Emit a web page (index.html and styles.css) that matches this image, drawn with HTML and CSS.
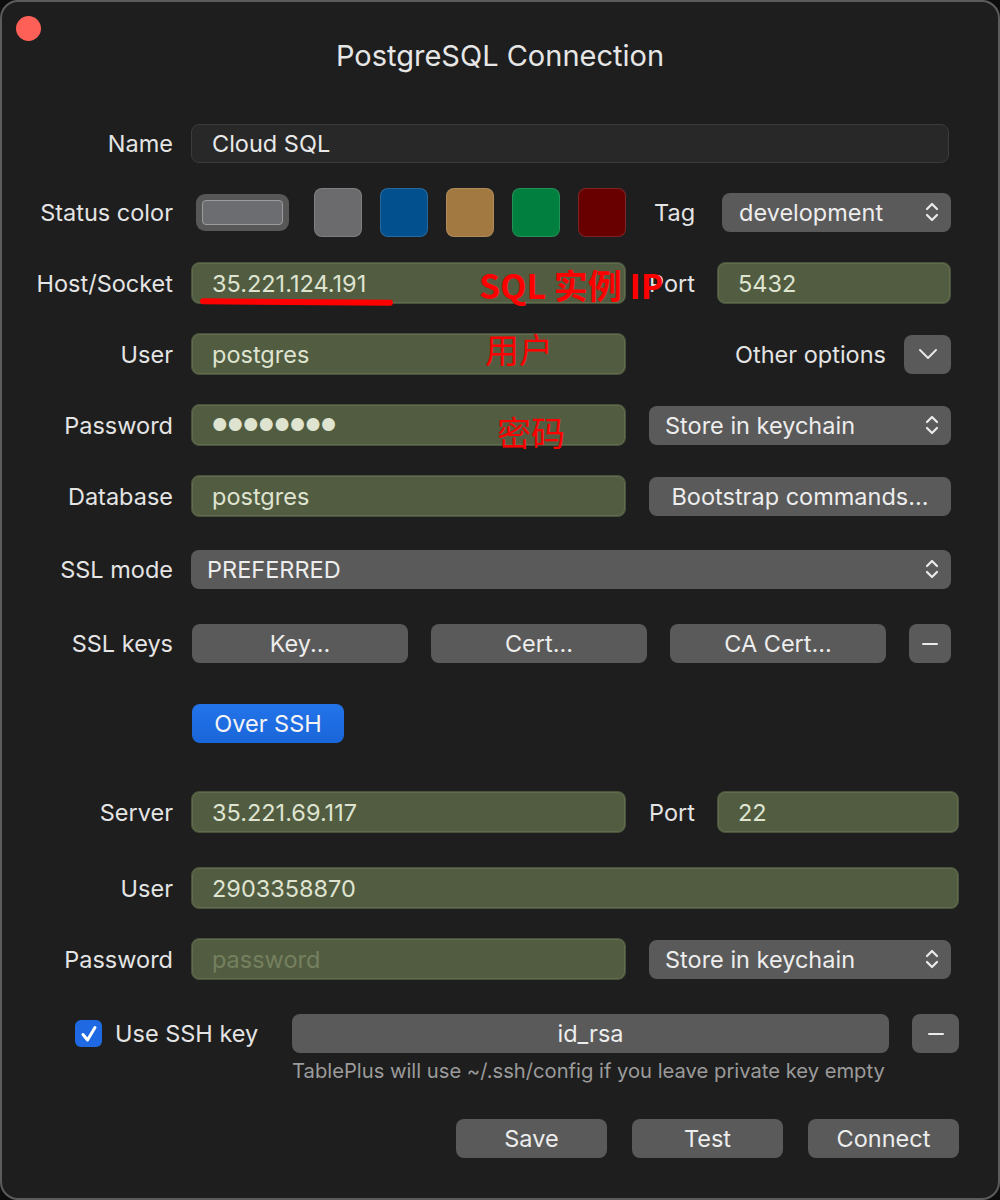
FILE: index.html
```html
<!DOCTYPE html>
<html>
<head>
<meta charset="utf-8">
<link rel="stylesheet" href="styles.css">
</head>
<body>
<div class="window">
  <span class="close-dot"></span>
  <h1 class="title">PostgreSQL Connection</h1>

  <div class="row row-name">
    <label class="lbl">Name</label>
    <div class="field field-plain grow">Cloud SQL</div>
  </div>

  <div class="row row-status">
    <label class="lbl">Status color</label>
    <div class="status-well"><span class="status-inner"></span></div>
    <div class="swatches">
      <span class="swatch sw-gray"></span>
      <span class="swatch sw-blue"></span>
      <span class="swatch sw-brown"></span>
      <span class="swatch sw-green"></span>
      <span class="swatch sw-red"></span>
    </div>
    <label class="side-lbl tag-lbl">Tag</label>
    <div class="select tag-select">development
      <svg class="updown" viewBox="0 0 14 26" width="14" height="26"><path d="M2 10 L7 5 L12 10 M2 16 L7 21 L12 16" fill="none" stroke="#eaeaea" stroke-width="2.2" stroke-linecap="round" stroke-linejoin="round"/></svg>
    </div>
  </div>

  <div class="row row-host">
    <label class="lbl">Host/Socket</label>
    <div class="field field-green half">35.221.124.191</div>
    <label class="side-lbl port-lbl">Port</label>
    <div class="field field-green port">5432</div>
  </div>

  <div class="row row-std">
    <label class="lbl">User</label>
    <div class="field field-green half">postgres</div>
    <div class="other">
      <span class="other-lbl">Other options</span>
      <div class="icon-btn">
        <svg viewBox="0 0 20 12" width="20" height="12"><path d="M2 2 L10 10 L18 2" fill="none" stroke="#e6e6e6" stroke-width="2" stroke-linecap="round" stroke-linejoin="round"/></svg>
      </div>
    </div>
  </div>

  <div class="row row-std">
    <label class="lbl">Password</label>
    <div class="field field-green half dots">●●●●●●●●</div>
    <div class="select side-select">Store in keychain
      <svg class="updown" viewBox="0 0 14 26" width="14" height="26"><path d="M2 10 L7 5 L12 10 M2 16 L7 21 L12 16" fill="none" stroke="#eaeaea" stroke-width="2.2" stroke-linecap="round" stroke-linejoin="round"/></svg>
    </div>
  </div>

  <div class="row row-std">
    <label class="lbl">Database</label>
    <div class="field field-green half">postgres</div>
    <div class="btn side-select centered">Bootstrap commands...</div>
  </div>

  <div class="row row-sslmode">
    <label class="lbl">SSL mode</label>
    <div class="select grow ssl-select">PREFERRED
      <svg class="updown" viewBox="0 0 14 26" width="14" height="26"><path d="M2 10 L7 5 L12 10 M2 16 L7 21 L12 16" fill="none" stroke="#eaeaea" stroke-width="2.2" stroke-linecap="round" stroke-linejoin="round"/></svg>
    </div>
  </div>

  <div class="row row-sslkeys">
    <label class="lbl">SSL keys</label>
    <div class="btn key-btn">Key...</div>
    <div class="btn key-btn">Cert...</div>
    <div class="btn key-btn">CA Cert...</div>
    <div class="btn minus-btn"><span class="minus"></span></div>
  </div>

  <div class="row row-ssh">
    <span class="lbl"></span>
    <div class="btn blue-btn">Over SSH</div>
  </div>

  <div class="row row-server wide">
    <label class="lbl">Server</label>
    <div class="field field-green half">35.221.69.117</div>
    <label class="side-lbl port-lbl">Port</label>
    <div class="field field-green port">22</div>
  </div>

  <div class="row row-std row-sshuser wide">
    <label class="lbl">User</label>
    <div class="field field-green grow">2903358870</div>
  </div>

  <div class="row row-std">
    <label class="lbl">Password</label>
    <div class="field field-green half placeholder">password</div>
    <div class="select side-select">Store in keychain
      <svg class="updown" viewBox="0 0 14 26" width="14" height="26"><path d="M2 10 L7 5 L12 10 M2 16 L7 21 L12 16" fill="none" stroke="#eaeaea" stroke-width="2.2" stroke-linecap="round" stroke-linejoin="round"/></svg>
    </div>
  </div>

  <div class="row row-sshkey">
    <div class="check-wrap">
      <span class="checkbox">
        <svg viewBox="0 0 26 26" width="26" height="26"><path d="M7 13.5 L11.5 19 L19 6.5" fill="none" stroke="#fff" stroke-width="3" stroke-linecap="round" stroke-linejoin="round"/></svg>
      </span>
      <span class="check-lbl">Use SSH key</span>
    </div>
    <div class="btn keyfile centered">id_rsa</div>
    <div class="btn minus-btn minus-wide"><span class="minus"></span></div>
  </div>
  <p class="hint">TablePlus will use ~/.ssh/config if you leave private key empty</p>

  <div class="actions">
    <div class="btn action">Save</div>
    <div class="btn action">Test</div>
    <div class="btn action">Connect</div>
  </div>

  <span class="note-ul"></span>
  <span class="note note-ip">SQL 实例 IP</span>
  <span class="note note-user">用户</span>
  <span class="note note-pass">密码</span>
</div>
</body>
</html>
```

FILE: styles.css
```css
* { box-sizing: border-box; }
html, body { margin: 0; padding: 0; }
body {
  background: #0d0d0d;
  font-family: Inter, "Open Sans", "Noto Sans CJK SC", sans-serif;
  color: #e4e4e4;
}
.window {
  position: relative;
  width: 1000px;
  height: 1200px;
  background: #1e1e1e;
  border: 2px solid #5c5c5c;
  border-radius: 18px;
  padding: 0 47px 0 0;
  overflow: hidden;
}
.close-dot {
  position: absolute;
  left: 14px;
  top: 14px;
  width: 25px;
  height: 25px;
  border-radius: 50%;
  background: #fe5f57;
}
.title {
  margin: 38px 0 0 0;
  height: 32px;
  line-height: 32px;
  text-align: center;
  font-size: 29px;
  font-weight: 400;
  color: #e6e6e6;
  padding-left: 47px;
}
.row {
  display: flex;
  align-items: center;
  font-size: 23.5px;
}
.lbl {
  width: 189px;
  flex: none;
  text-align: right;
  padding-right: 18px;
  color: #e4e4e4;
}
.grow { flex: 1; }
.half { width: 435px; flex: none; }
.wide { margin-right: -8px; }

.row-name { margin-top: 52px; height: 39px; }
.row-status { margin-top: 25px; height: 49px; }
.row-host { margin-top: 25px; height: 42px; }
.row-std { margin-top: 29px; height: 42px; }
.row-sslmode { margin-top: 33px; height: 39px; }
.row-sslkeys { margin-top: 35px; height: 39px; }
.row-ssh { margin-top: 41px; height: 39px; }
.row-server { margin-top: 48px; height: 42px; }
.row-std.row-sshuser { margin-top: 34px; }
.row-sshkey { margin-top: 34px; height: 39px; }

.field {
  height: 42px;
  border-radius: 8px;
  padding: 0 20px;
  display: flex;
  align-items: center;
  font-size: 23.5px;
}
.field-plain {
  height: 39px;
  background: #282828;
  border: 1px solid #3b3b3b;
  color: #e8e8e8;
  margin-right: 2px;
}
.field-green {
  background: #525c41;
  border: 1px solid #48513a;
  box-shadow: inset 0 0 0 1px #626d4f;
  color: #dfe4d1;
}
.dots { font-size: 17px; letter-spacing: 0; }
.placeholder { color: #75805f; }
.port { flex: 1; margin-left: 0; }

.side-lbl { color: #e4e4e4; }
.port-lbl { width: 91px; padding-left: 23px; flex: none; }
.tag-lbl { width: 96px; padding-left: 28px; flex: none; }

.status-well {
  width: 93px;
  height: 37px;
  margin-left: 5px;
  border-radius: 9px;
  background: #575757;
  padding: 6px;
  flex: none;
}
.status-inner {
  display: block;
  width: 100%;
  height: 100%;
  background: #6c6d71;
  border: 1px solid #9b9b9b;
  border-radius: 4px;
}
.swatches {
  display: flex;
  gap: 18px;
  margin-left: 25px;
}
.swatch {
  width: 48px;
  height: 49px;
  border-radius: 8px;
  border: 1px solid rgba(255,255,255,0.14);
}
.sw-gray { background: #6b6b6e; }
.sw-blue { background: #02518e; }
.sw-brown { background: #a27940; }
.sw-green { background: #007f3e; }
.sw-red { background: #690000; }

.select, .btn {
  background: #5a5a5a;
  border-radius: 8px;
  color: #ededed;
  font-size: 23.5px;
  height: 39px;
  display: flex;
  align-items: center;
  position: relative;
}
.select { padding-left: 17px; }
.updown {
  position: absolute;
  right: 12px;
  top: 6px;
}
.tag-select { flex: 1; }
.ssl-select { padding-left: 16px; }
.side-select { flex: 1; margin-left: 23px; padding-left: 16px; }
.centered { justify-content: center; padding-left: 0; }

.other {
  flex: 1;
  display: flex;
  align-items: center;
  justify-content: flex-end;
}
.other-lbl { margin-right: 18px; color: #e4e4e4; }
.icon-btn {
  width: 47px;
  height: 39px;
  border-radius: 8px;
  background: #5a5a5a;
  display: flex;
  align-items: center;
  justify-content: center;
}

.key-btn {
  width: 216px;
  justify-content: center;
  margin-left: 1px;
  margin-right: 22px;
  flex: none;
}
.minus-btn {
  flex: 1;
  justify-content: center;
  margin-left: 1px;
}
.minus {
  display: block;
  width: 16px;
  height: 2px;
  background: #eaeaea;
  border-radius: 1px;
}
.blue-btn {
  background: linear-gradient(#2374ea, #1a65da);
  width: 152px;
  margin-left: 1px;
  justify-content: center;
  color: #f4f4f4;
}

.row-sshkey { padding-left: 73px; margin-right: -8px; }
.check-wrap {
  display: flex;
  align-items: center;
  width: 217px;
  flex: none;
}
.checkbox {
  width: 27px;
  height: 27px;
  border-radius: 6px;
  background: #1f6ae2;
  display: flex;
  align-items: center;
  justify-content: center;
  margin-right: 13px;
}
.check-lbl { color: #e4e4e4; }
.keyfile { flex: 1; margin-right: 23px; }
.minus-wide { flex: none; width: 47px; margin-left: 0; }

.hint {
  margin: 6px 0 0 290px;
  font-size: 20.2px;
  color: #9b9b9b;
  height: 24px;
  line-height: 24px;
  white-space: nowrap;
}

.actions {
  display: flex;
  justify-content: flex-end;
  gap: 25px;
  margin: 36px -8px 0 0;
}
.action {
  width: 151px;
  justify-content: center;
}

.note {
  position: absolute;
  color: #ff0000;
  font-family: "Noto Sans CJK SC", sans-serif;
  line-height: 1;
}
.note-ip {
  left: 477px;
  top: 266px;
  font-size: 34px;
  font-weight: 700;
}
.note-user {
  left: 483px;
  top: 330px;
  font-size: 34px;
}
.note-pass {
  left: 495px;
  top: 413px;
  font-size: 34px;
}
.note-ul {
  position: absolute;
  left: 198px;
  top: 297px;
  width: 193px;
  height: 6px;
  background: #ff0000;
  border-radius: 3px;
  transform: rotate(0.4deg);
}
```
